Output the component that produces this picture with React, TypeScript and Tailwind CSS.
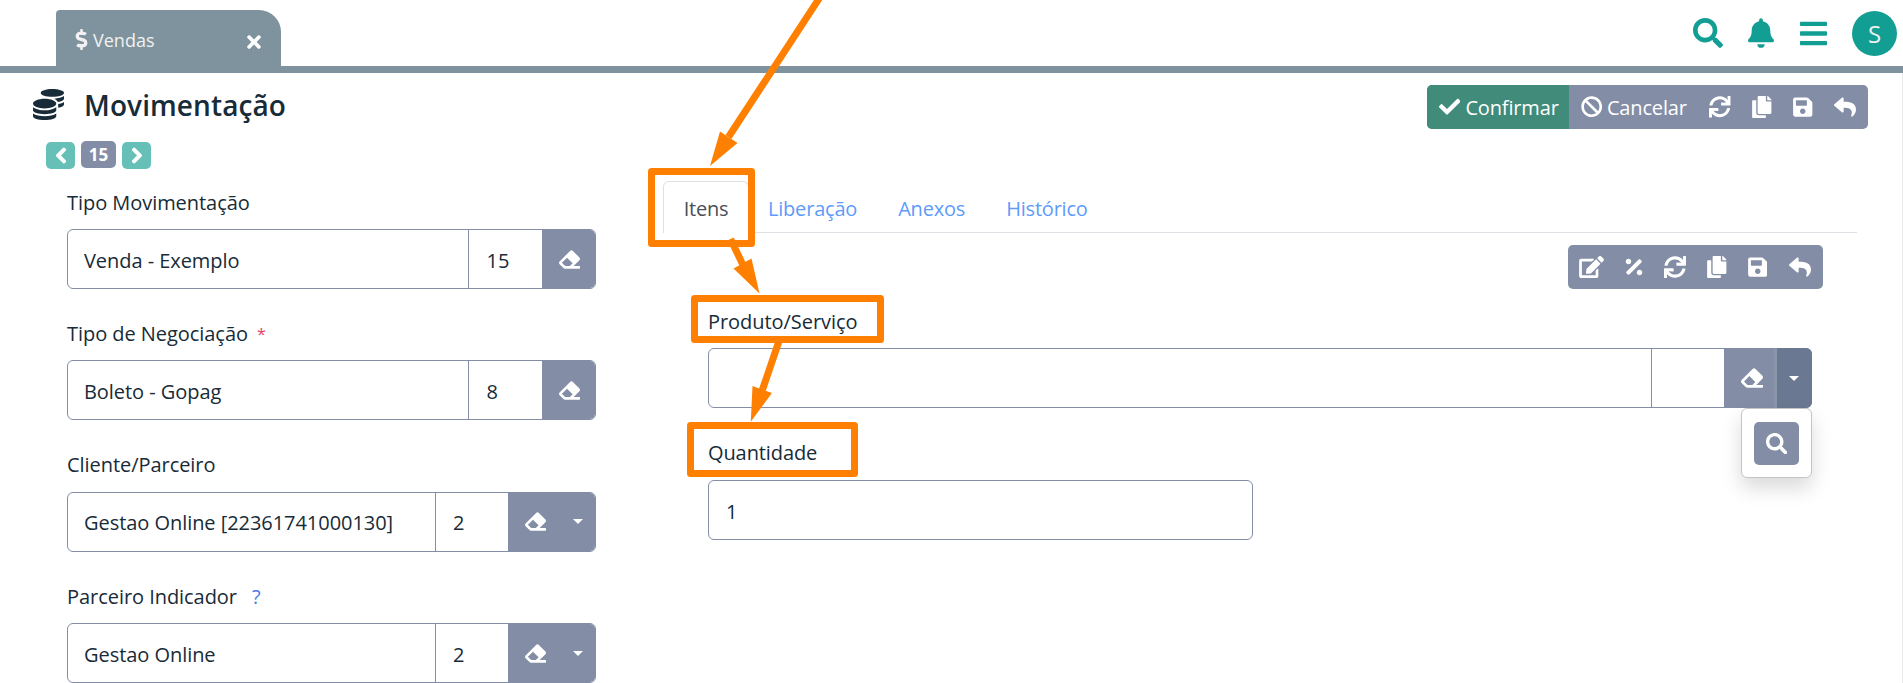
import type { ReactNode } from 'react';
import {
  FaBan,
  FaBars,
  FaBell,
  FaCheck,
  FaChevronLeft,
  FaChevronRight,
  FaCoins,
  FaCopy,
  FaDollarSign,
  FaEdit,
  FaEraser,
  FaPercentage,
  FaReply,
  FaSave,
  FaSearch,
  FaSync,
  FaTimes,
} from 'react-icons/fa';

const Caret = () => (
  <svg viewBox="0 0 10 5" className="h-[5px] w-[10px]" fill="currentColor">
    <path d="M0 0h10L5 5z" />
  </svg>
);

function Header() {
  return (
    <header className="flex h-[73px] shrink-0 items-end justify-between border-b-[7px] border-[#7e939e] pl-14 pr-1.5">
      <div className="flex h-14 w-[225px] items-center rounded-tl rounded-tr-[22px] bg-[#7e939e] pb-px pl-[19px] pr-[17px] pt-1 text-[#f1f1f1]">
        <FaDollarSign className="mr-1 h-[21px] w-[13px]" />
        <span className="pl-px text-[18px]">Vendas</span>
        <FaTimes className="ml-auto mt-1 size-[20px] text-white" />
      </div>
      <div className="flex h-full items-center text-[#139e94]">
        <FaSearch className="mr-[25px] size-[30px]" />
        <FaBell className="mr-[26px] h-[30px] w-[26px]" />
        <FaBars className="mr-[25px] h-[31px] w-[27px]" />
        <div className="flex size-[45px] items-center justify-center rounded-full bg-[#139e94] pt-0.5 text-[24px] leading-none text-[#eaf3f2]">
          S
        </div>
      </div>
    </header>
  );
}

function Pager() {
  return (
    <div className="mt-3 flex h-7 items-center gap-1.5 pl-[46px] text-white">
      <button className="mt-px flex h-[27px] w-[29px] items-center justify-center rounded-[5px] bg-[#66c0b8]">
        <FaChevronLeft className="h-[17px] w-[12px]" stroke="currentColor" strokeWidth="40" />
      </button>
      <span className="-mt-px flex h-[27px] w-[35px] items-center justify-center rounded-[5px] bg-[#838ea6] text-[17px] font-bold leading-none">
        15
      </span>
      <button className="mt-px flex h-[27px] w-[29px] items-center justify-center rounded-[5px] bg-[#66c0b8]">
        <FaChevronRight className="h-[17px] w-[12px]" stroke="currentColor" strokeWidth="40" />
      </button>
    </div>
  );
}

function MainToolbar() {
  return (
    <div className="flex h-11 w-[441px] overflow-hidden rounded-[5px] bg-[#838ea6] text-white">
      <button className="flex w-[142px] items-center bg-[#408b79] pl-3">
        <FaCheck className="mr-[5px] size-[21.4px]" />
        <span className="pt-px tracking-[-0.15px]">Confirmar</span>
      </button>
      <button className="flex items-center pl-[11.5px]">
        <FaBan className="mr-[5px] size-[21.4px]" />
        <span className="pt-px tracking-[-0.15px]">Cancelar</span>
      </button>
      <button className="ml-[22.5px]"><FaSync className="size-[21.5px]" /></button>
      <button className="ml-[21.5px]"><FaCopy className="h-[22px] w-[19.5px]" /></button>
      <button className="ml-[21.5px]"><FaSave className="h-[22px] w-[19.5px]" /></button>
      <button className="ml-[21.5px]"><FaReply className="size-[22px]" /></button>
    </div>
  );
}

function ItemToolbar() {
  return (
    <div className="ml-auto mr-[34px] mt-3 flex h-11 w-[255px] items-center rounded-[5px] bg-[#838ea6] pl-[11px] text-white">
      <FaEdit className="h-[22px] w-[25px]" />
      <FaPercentage className="ml-[20.5px] h-[22px] w-[18px]" />
      <FaSync className="ml-[21px] size-[22px]" />
      <FaCopy className="ml-[21.5px] h-[22px] w-[19.5px]" />
      <FaSave className="ml-[21px] h-[22px] w-[19.5px]" />
      <FaReply className="ml-[21.5px] size-[22px]" />
    </div>
  );
}

type FieldProps = { label: string; extra?: ReactNode; value: string; code: string; menu?: boolean };

function LookupField({ label, extra, value, code, menu }: FieldProps) {
  return (
    <div className="h-[131.4px] shrink-0">
      <label className="flex h-[30px] items-center pt-px tracking-[-0.05px]">
        {label}
        {extra}
      </label>
      <div className="mt-3 flex h-[60px] overflow-hidden rounded-[6px] border border-[#838ea6]">
        <div className="flex flex-1 items-center border-r border-[#838ea6] pl-4 pt-[3px] tracking-[-0.05px]">{value}</div>
        <div className={menu ? 'flex w-[72px] items-center pl-[17px] pt-[3px]' : 'flex w-[73px] items-center pl-[17.5px] pt-[3px]'}>{code}</div>
        <div className={menu ? 'flex w-[87px] items-center bg-[#838ea6] pl-[17px] text-white' : 'flex w-[53px] items-center bg-[#838ea6] pl-[17px] text-white'}>
          <FaEraser className="size-[21px]" />
          {menu && <span className="ml-[27px]"><Caret /></span>}
        </div>
      </div>
    </div>
  );
}

const fields: FieldProps[] = [
  { label: 'Tipo Movimentação', value: 'Venda - Exemplo', code: '15' },
  { label: 'Tipo de Negociação', extra: <span className="ml-[9px] text-[16px] text-[#e5455f]">*</span>, value: 'Boleto - Gopag', code: '8' },
  { label: 'Cliente/Parceiro', value: 'Gestao Online [22361741000130]', code: '2', menu: true },
  { label: 'Parceiro Indicador', extra: <span className="ml-[15px] text-[#4a7be8]">?</span>, value: 'Gestao Online', code: '2', menu: true },
];

function Tabs() {
  return (
    <nav className="flex h-[52px] border-b border-[#dee0e6] tracking-[-0.2px] text-[#5f9bfb]">
      <a className="-mb-px flex w-[86px] items-center justify-center rounded-t-[6px] border border-b-0 border-[#dee0e6] bg-white pt-0.5 text-[#495057]">
        Itens
      </a>
      <a className="ml-[19px] flex items-center pt-1">Liberação</a>
      <a className="ml-[41px] flex items-center pt-1">Anexos</a>
      <a className="ml-[41px] flex items-center pt-1">Histórico</a>
    </nav>
  );
}

function ItemForm() {
  return (
    <div className="mt-[17px] pl-[45px] pr-[45px]">
      <label className="flex h-[30px] items-center pt-0.5 tracking-[-0.05px]">Produto/Serviço</label>
      <div className="relative mt-3 flex h-[60px] rounded-[6px] border border-[#838ea6]">
        <div className="flex-1 border-r border-[#838ea6]" />
        <div className="w-[72px]" />
        <div className="-my-px flex w-[53px] items-center bg-[#838ea6] pl-[17px] text-white">
          <FaEraser className="size-[22px]" />
        </div>
        <div className="-my-px -mr-px flex w-[35px] items-center justify-center rounded-r-[6px] bg-[#6a7891] pr-px text-white shadow-[-3px_0_0_#8b95a9]">
          <Caret />
        </div>
        <div className="absolute -right-px top-[59px] z-10 flex h-[70px] w-[71px] items-center justify-center rounded-[6px] border border-[#c4c4c4] bg-white shadow-[0_10px_20px_rgba(0,0,0,0.15)]">
          <button className="flex h-[43px] w-[45px] items-center justify-center rounded-[5px] bg-[#838ea6] pt-px text-white">
            <FaSearch className="size-[21.5px]" />
          </button>
        </div>
      </div>
      <label className="mt-[30px] flex h-[30px] items-center tracking-[-0.1px]">Quantidade</label>
      <div className="mt-3 flex h-[60px] w-[545px] items-center rounded-[6px] border border-[#838ea6] pl-[17px] pt-[3px]">1</div>
    </div>
  );
}

/* Tutorial highlights drawn over the form */
function Highlights() {
  return (
    <svg viewBox="0 0 1903 683" className="pointer-events-none absolute left-0 top-0 h-[683px] w-[1903px]">
      <g fill="none" stroke="#ff8000" strokeWidth="7" strokeLinejoin="round">
        <rect x="651.5" y="171.5" width="100" height="72" />
        <rect x="694.5" y="298.5" width="186" height="41" />
        <rect x="690.5" y="425.5" width="164" height="48" />
        <path d="M821.4 -5 728.5 137" />
        <path d="M730.5 239 743 265" />
        <path d="M779 341 762 391" />
      </g>
      <g fill="#ff8000">
        <path d="m710 166 10-34.500 17.500 11.500z" />
        <path d="m759.500 293.500-26-25 18-10z" />
        <path d="m750.800 421.700 1.700-35.700 19.500 7z" />
      </g>
    </svg>
  );
}

export default function App() {
  return (
    <div className="relative flex h-[683px] w-full flex-col overflow-hidden bg-white font-['Open_Sans','Noto_Sans',sans-serif] text-[20px] leading-[30px] text-[#172b38]">
      <Header />
      <main className="flex-1 border-r border-[#e9e9ee] pt-3">
        <div className="flex h-11 items-start justify-between pl-[33px] pr-[34px]">
          <div className="flex items-center">
            <FaCoins className="-mt-px size-[31px]" />
            <h1 className="ml-5 pt-px text-[28px] font-semibold leading-[38px] tracking-[0.1px]">Movimentação</h1>
          </div>
          <MainToolbar />
        </div>
        <Pager />
        <div className="mt-3 flex items-start">
          <section className="ml-[67px] flex w-[529px] flex-col pt-1.5">
            {fields.map((f) => (
              <LookupField key={f.label} {...f} />
            ))}
          </section>
          <section className="ml-[67px] w-[1194px]">
            <Tabs />
            <ItemToolbar />
            <ItemForm />
          </section>
        </div>
      </main>
      <Highlights />
    </div>
  );
}
